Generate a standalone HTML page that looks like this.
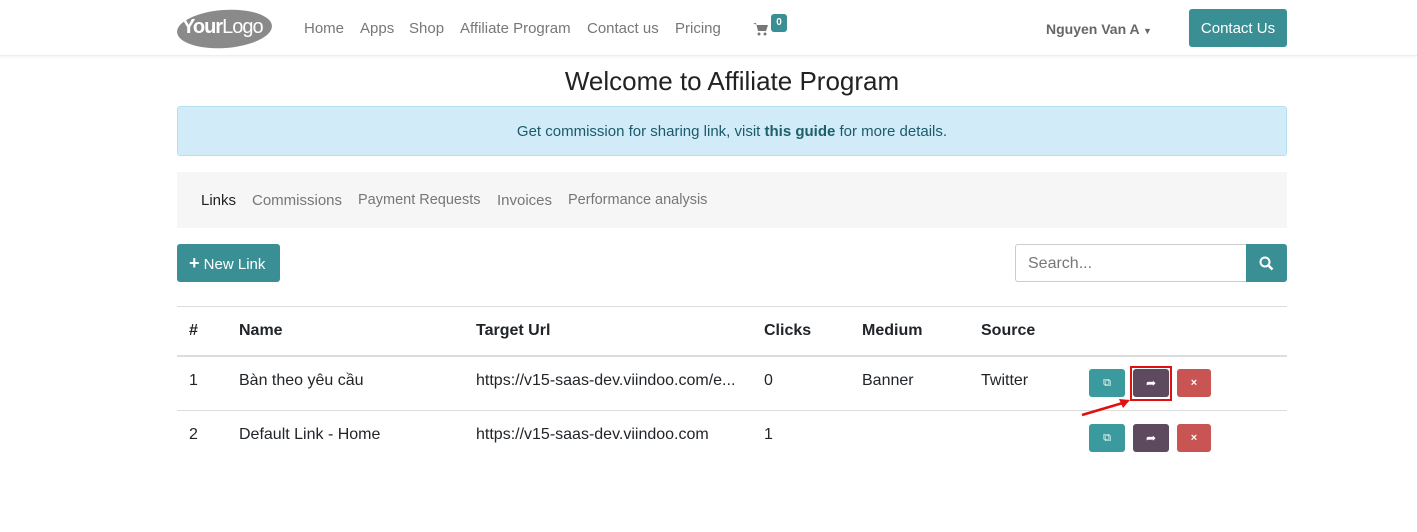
<!DOCTYPE html>
<html><head><meta charset="utf-8"><style>
*{box-sizing:border-box;margin:0;padding:0}
body{width:1417px;height:532px;background:#fff;font-family:"Liberation Sans",sans-serif;color:#212529;position:relative;overflow:hidden}
.a{position:absolute}
.nav{top:0;left:0;width:1417px;height:56px;border-bottom:1px solid #eee;box-shadow:0 1px 3px rgba(0,0,0,.06)}
.nl{top:20px;font-size:15px;color:#777}
.btn{border-radius:3px;color:#fff}
</style></head><body>
<div class="a nav"></div>
<div class="a" style="left:177px;top:10px;width:95px;height:38px;border-radius:50%;background:#8a8a8a;transform:rotate(-4deg)"></div>
<div class="a" style="left:182px;top:16px;font-size:20px;color:#fff;letter-spacing:-1px"><b>Your</b>Logo</div>
<div class="a nl" style="left:304px">Home</div>
<div class="a nl" style="left:360px">Apps</div>
<div class="a nl" style="left:409px">Shop</div>
<div class="a nl" style="left:460px">Affiliate Program</div>
<div class="a nl" style="left:587px">Contact us</div>
<div class="a nl" style="left:675px">Pricing</div>
<svg class="a" style="left:753px;top:22px" width="16" height="14" viewBox="0 0 16 14"><path d="M0 1h3l2 8h8l2-6H4" fill="#777"/><circle cx="6" cy="12" r="1.5" fill="#777"/><circle cx="12" cy="12" r="1.5" fill="#777"/></svg>
<div class="a" style="left:771px;top:14px;width:16px;height:18px;background:#3a8f94;border-radius:3px;color:#fff;font-size:10px;font-weight:bold;text-align:center;line-height:18px">0</div>
<div class="a" style="left:1046px;top:21px;font-size:14px;font-weight:bold;color:#666">Nguyen Van A <span style="font-size:9px">▼</span></div>
<div class="a btn" style="left:1189px;top:9px;width:98px;height:38px;background:#3a8f94;font-size:15px;text-align:center;line-height:39px">Contact Us</div>
<div class="a" style="left:177px;width:1110px;top:66px;text-align:center;font-size:26px;color:#222">Welcome to Affiliate Program</div>
<div class="a" style="left:177px;top:106px;width:1110px;height:50px;background:#d1ecf8;border:1px solid #b6e0f2;border-radius:3px;text-align:center;line-height:50px;font-size:15px;color:#1a5a6b">Get commission for sharing link, visit <b style="color:#1d5f6a">this guide</b> for more details.</div>
<div class="a" style="left:177px;top:172px;width:1110px;height:56px;background:#f6f6f6"></div>
<div class="a" style="left:201px;top:192px;font-size:15px;color:#222">Links</div>
<div class="a" style="left:252px;top:192px;font-size:15px;color:#777">Commissions</div>
<div class="a" style="left:358px;top:192px;font-size:14.5px;color:#777">Payment Requests</div>
<div class="a" style="left:497px;top:192px;font-size:15px;color:#777">Invoices</div>
<div class="a" style="left:568px;top:192px;font-size:14.5px;color:#777">Performance analysis</div>
<div class="a btn" style="left:177px;top:244px;width:103px;height:38px;background:#3a8f94;font-size:15px;line-height:38px;padding-left:12px"><b style="font-size:18px">+</b> New Link</div>
<div class="a" style="left:1015px;top:244px;width:232px;height:38px;border:1px solid #ccc;border-radius:3px 0 0 3px;font-size:16px;color:#777;padding:10px 12px">Search...</div>
<div class="a" style="left:1246px;top:244px;width:41px;height:38px;background:#3a8f94;border-radius:0 3px 3px 0"></div>
<svg class="a" style="left:1259px;top:256px" width="15" height="15"><circle cx="6" cy="6" r="4.5" stroke="#fff" stroke-width="2" fill="none"/><path d="M9.5 9.5l4 4" stroke="#fff" stroke-width="2.4"/></svg>
<div class="a" style="left:177px;top:306px;width:1110px;border-top:1px solid #ddd"></div>
<div class="a" style="left:177px;top:355px;width:1110px;border-top:2px solid #ddd"></div>
<div class="a" style="left:177px;top:410px;width:1110px;border-top:1px solid #ddd"></div>
<div class="a" style="top:322px;left:0;font-size:16px;font-weight:bold;width:1417px;height:20px">
<span class="a" style="left:189px">#</span><span class="a" style="left:239px">Name</span><span class="a" style="left:476px">Target Url</span><span class="a" style="left:764px">Clicks</span><span class="a" style="left:862px">Medium</span><span class="a" style="left:981px">Source</span></div>
<div class="a" style="top:372px;left:0;font-size:16px;width:1417px;height:20px">
<span class="a" style="left:189px">1</span><span class="a" style="left:239px">Bàn theo yêu cầu</span><span class="a" style="left:476px">https://v15-saas-dev.viindoo.com/e...</span><span class="a" style="left:764px">0</span><span class="a" style="left:862px">Banner</span><span class="a" style="left:981px">Twitter</span></div>
<div class="a" style="top:426px;left:0;font-size:16px;width:1417px;height:20px">
<span class="a" style="left:189px">2</span><span class="a" style="left:239px">Default Link - Home</span><span class="a" style="left:476px">https://v15-saas-dev.viindoo.com</span><span class="a" style="left:764px">1</span></div>
<div class="a btn" style="left:1089px;top:369px;width:36px;height:28px;background:#3a9a9e;font-size:11px;text-align:center;line-height:28px">⧉</div>
<div class="a btn" style="left:1133px;top:369px;width:36px;height:28px;background:#5e4a5e;font-size:12px;text-align:center;line-height:28px">➦</div>
<div class="a btn" style="left:1177px;top:369px;width:34px;height:28px;background:#c85454;font-size:11px;text-align:center;line-height:28px;font-weight:bold">×</div>
<div class="a" style="left:1130px;top:366px;width:42px;height:35px;border:2px solid #e01010"></div>
<svg class="a" style="left:1080px;top:396px" width="52" height="22"><path d="M2 19L46 6" stroke="#e01010" stroke-width="2.5"/><path d="M50 4l-11 -1 4 9z" fill="#e01010"/></svg>
<div class="a btn" style="left:1089px;top:424px;width:36px;height:28px;background:#3a9a9e;font-size:11px;text-align:center;line-height:28px">⧉</div>
<div class="a btn" style="left:1133px;top:424px;width:36px;height:28px;background:#5e4a5e;font-size:12px;text-align:center;line-height:28px">➦</div>
<div class="a btn" style="left:1177px;top:424px;width:34px;height:28px;background:#c85454;font-size:11px;text-align:center;line-height:28px;font-weight:bold">×</div>
</body></html>
